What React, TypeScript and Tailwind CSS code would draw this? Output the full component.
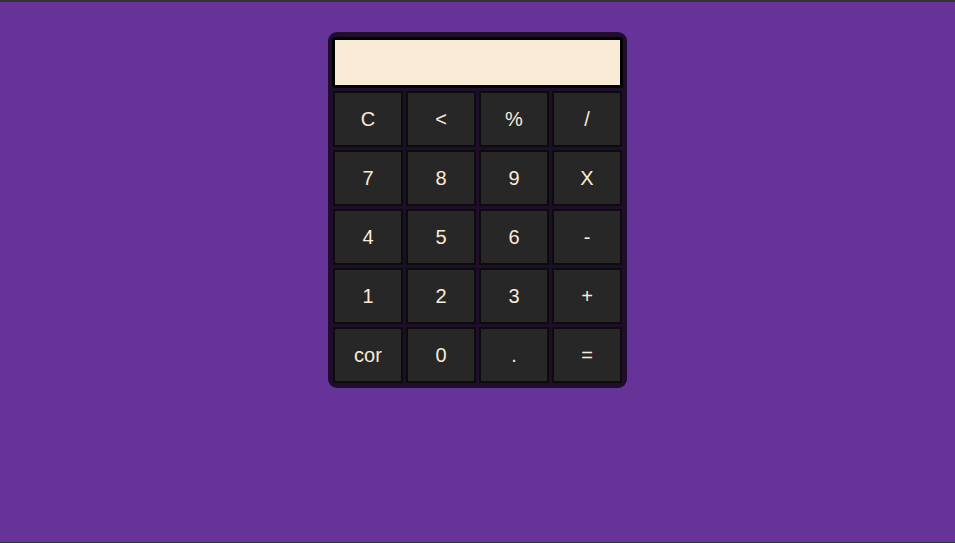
import React from "react";

const keys = ["C", "<", "%", "/", "7", "8", "9", "X", "4", "5", "6", "-", "1", "2", "3", "+", "cor", "0", ".", "="];

export default function App() {
  return (
    <div
      className="h-[543px] w-full bg-[#663399] border-t-2 border-b border-[#333333] flex justify-center"
      style={{ fontFamily: '"Liberation Sans", Arial, sans-serif' }}
    >
      <div className="mt-[30px] w-[299px] h-[356px] bg-[#1e0e2c] rounded-[9px] pt-[5px] px-[4px] pb-[4px] flex flex-col gap-[3px] self-start">
        <div className="h-[51px] w-full bg-[#faebd7] border-[3px] border-black rounded-[3px]"></div>
        <div className="grid grid-cols-[repeat(4,70px)] auto-rows-[56px] gap-[3px] justify-center">
          {keys.map((k) => (
            <button
              key={k}
              className="bg-[#272727] border-2 border-[#0c0c0c] text-[#faebd7] text-[20px] flex items-center justify-center"
            >
              {k}
            </button>
          ))}
        </div>
      </div>
    </div>
  );
}
